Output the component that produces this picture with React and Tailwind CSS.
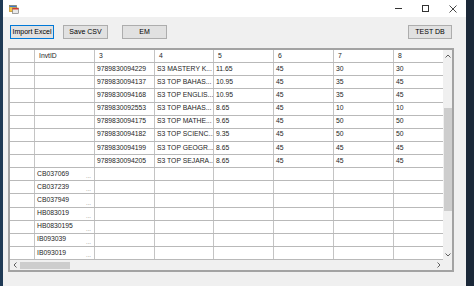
import React from "react";

const codes = [
  "9789830094229",
  "9789830094137",
  "9789830094168",
  "9789830092553",
  "9789830094175",
  "9789830094182",
  "9789830094199",
  "9789830094205",
];
const names = [
  "S3 MASTERY K...",
  "S3 TOP BAHAS...",
  "S3 TOP ENGLIS...",
  "S3 TOP BAHAS...",
  "S3 TOP MATHE...",
  "S3 TOP SCIENC...",
  "S3 TOP GEOGR...",
  "S3 TOP SEJARA...",
];
const prices = ["11.65", "10.95", "10.95", "8.65", "9.65", "9.35", "8.65", "8.65"];
const c7 = ["30", "35", "35", "10", "50", "50", "45", "45"];
const c8 = ["30", "45", "45", "10", "50", "50", "45", "45"];
const ids = ["CB037069", "CB037239", "CB037949", "HB083019", "HB0830195", "IB093039", "IB093019"];

const widths = ["w-[25px]", "w-[60px]", "w-[60px]", "w-[59px]", "w-[60px]", "w-[60px]", "w-[60px]", "w-[60px]"];

function Row({ cells, header, idRow }) {
  return (
    <div className="flex h-[13.125px] shrink-0 border-b border-[#b9b9b9] bg-white">
      {cells.map((c, i) => (
        <div
          key={i}
          className={`${widths[i]} shrink-0 h-full border-r border-[#c4c4c4] flex items-center overflow-hidden whitespace-nowrap relative ${header ? "pl-[4px]" : "pl-[2px]"}`}
        >
          <span className="leading-none">{c}</span>
          {idRow && i === 1 ? (
            <span className="absolute right-[3px] bottom-[1px] text-[6px] leading-none text-[#777]">...</span>
          ) : null}
        </div>
      ))}
    </div>
  );
}

function Btn({ children, focused, className }) {
  return (
    <div
      className={`h-[14px] flex items-center justify-center bg-[#e1e1e1] border ${focused ? "border-[#0078d7]" : "border-[#adadad]"} text-[7px] text-black ${className}`}
    >
      {children}
    </div>
  );
}

export default function App() {
  const rows = [];
  for (let i = 0; i < 8; i++) {
    rows.push({ cells: ["", "", codes[i], names[i], prices[i], "45", c7[i], c8[i]], idRow: false });
  }
  ids.forEach((id) => rows.push({ cells: ["", id, "", "", "", "", "", ""], idRow: true }));

  return (
    <div
      className="w-[474px] h-[286px] flex bg-[#1b2838] overflow-hidden"
      style={{ fontFamily: '"Liberation Sans", Arial, sans-serif' }}
    >
      <div className="w-[3px] shrink-0 bg-[#1f3a55]" />
      <div className="w-[463px] shrink-0 flex flex-col bg-[#f0f0f0]">
        {/* Title bar */}
        <div className="h-[17px] shrink-0 bg-white flex items-center relative">
          <svg className="ml-[6px]" width="10" height="10" viewBox="0 0 10 10">
            <rect x="0.5" y="1.5" width="7" height="6" fill="#f6c443" stroke="#b07d12" strokeWidth="0.6" />
            <rect x="0.5" y="1.5" width="7" height="1.6" fill="#3a78c9" />
            <rect x="3.5" y="4" width="6" height="5.5" fill="#e9e9e9" stroke="#6b6b6b" strokeWidth="0.6" />
            <rect x="3.5" y="4" width="6" height="1.5" fill="#d33b2f" />
          </svg>
          <div className="ml-auto flex items-center h-full text-[#222]">
            <div className="w-[27px] h-full flex items-center justify-center">
              <div className="w-[7px] h-px bg-[#333]" />
            </div>
            <div className="w-[27px] h-full flex items-center justify-center">
              <div className="w-[7px] h-[7px] border border-[#333]" />
            </div>
            <div className="w-[27px] h-full flex items-center justify-center">
              <svg width="8" height="8" viewBox="0 0 8 8">
                <path d="M0.5 0.5 L7.5 7.5 M7.5 0.5 L0.5 7.5" stroke="#333" strokeWidth="0.9" />
              </svg>
            </div>
          </div>
        </div>

        {/* Toolbar */}
        <div className="flex items-start pt-[8px] pl-[7px] pr-[14px] h-[31px] shrink-0">
          <Btn focused className="w-[44px]">Import Excel</Btn>
          <Btn className="w-[45px] ml-[9px]">Save CSV</Btn>
          <Btn className="w-[45px] ml-[14px]">EM</Btn>
          <Btn className="w-[44px] ml-auto">TEST DB</Btn>
        </div>

        {/* Grid */}
        <div className="ml-[5px] w-[446px] h-[224px] border-2 border-[#a3a3a3] flex flex-col bg-white text-[6.8px] text-[#1e1e1e]">
          <div className="flex flex-1 min-h-0">
            <div className="flex-1 min-w-0 overflow-hidden flex flex-col">
              <Row header cells={["", "InvtID", "3", "4", "5", "6", "7", "8"]} />
              {rows.map((r, i) => (
                <Row key={i} cells={r.cells} idRow={r.idRow} />
              ))}
            </div>
            {/* vertical scrollbar */}
            <div className="w-[9px] shrink-0 bg-[#f0f0f0] flex flex-col items-center">
              <div className="h-[11px] w-full flex items-center justify-center">
                <svg width="6" height="4" viewBox="0 0 6 4">
                  <path d="M0.5 3.5 L3 1 L5.5 3.5" stroke="#606060" strokeWidth="1" fill="none" />
                </svg>
              </div>
              <div className="h-[47px] shrink-0" />
              <div className="w-[8px] h-[103px] bg-[#cdcdcd]" />
              <div className="flex-1" />
              <div className="h-[11px] w-full flex items-center justify-center">
                <svg width="6" height="4" viewBox="0 0 6 4">
                  <path d="M0.5 0.5 L3 3 L5.5 0.5" stroke="#606060" strokeWidth="1" fill="none" />
                </svg>
              </div>
            </div>
          </div>
          {/* horizontal scrollbar */}
          <div className="h-[10px] shrink-0 flex bg-[#f0f0f0]">
            <div className="flex-1 flex items-center">
              <div className="w-[9px] h-full flex items-center justify-center">
                <svg width="4" height="6" viewBox="0 0 4 6">
                  <path d="M3.5 0.5 L1 3 L3.5 5.5" stroke="#606060" strokeWidth="1" fill="none" />
                </svg>
              </div>
              <div className="ml-[1px] w-[50px] h-[7px] bg-[#cdcdcd]" />
              <div className="flex-1" />
              <div className="w-[9px] h-full flex items-center justify-center">
                <svg width="4" height="6" viewBox="0 0 4 6">
                  <path d="M0.5 0.5 L3 3 L0.5 5.5" stroke="#606060" strokeWidth="1" fill="none" />
                </svg>
              </div>
            </div>
            <div className="w-[9px] shrink-0 bg-[#f0f0f0]" />
          </div>
        </div>
      </div>
      <div className="flex-1 bg-[#1b2838]" />
    </div>
  );
}
